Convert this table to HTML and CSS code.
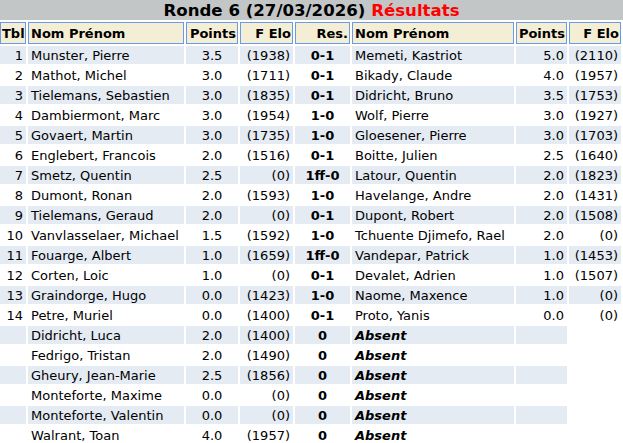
FILE: index.html
```html
<!DOCTYPE html>
<html lang="fr">
<head>
<meta charset="utf-8">
<title>Ronde 6</title>
<link rel="stylesheet" href="styles.css">
</head>
<body>
<div class="title">Ronde 6 (27/03/2026) <span class="red">Résultats</span></div>
<table class="res">
<colgroup>
<col class="c-tbl"><col class="c-nom1"><col class="c-pts"><col class="c-elo"><col class="c-res"><col class="c-nom2"><col class="c-pts2"><col class="c-elo2">
</colgroup>
<thead>
<tr><th>Tbl</th><th class="l">Nom Prénom</th><th>Points</th><th>F Elo</th><th>Res.</th><th class="l">Nom Prénom</th><th>Points</th><th>F Elo</th></tr>
</thead>
<tbody>
<tr class="o"><td class="r">1</td><td>Munster, Pierre</td><td class="c">3.5</td><td class="r">(1938)</td><td class="c b">0-1</td><td>Memeti, Kastriot</td><td class="r">5.0</td><td class="r">(2110)</td></tr>
<tr><td class="r">2</td><td>Mathot, Michel</td><td class="c">3.0</td><td class="r">(1711)</td><td class="c b">0-1</td><td>Bikady, Claude</td><td class="r">4.0</td><td class="r">(1957)</td></tr>
<tr class="o"><td class="r">3</td><td>Tielemans, Sebastien</td><td class="c">3.0</td><td class="r">(1835)</td><td class="c b">0-1</td><td>Didricht, Bruno</td><td class="r">3.5</td><td class="r">(1753)</td></tr>
<tr><td class="r">4</td><td>Dambiermont, Marc</td><td class="c">3.0</td><td class="r">(1954)</td><td class="c b">1-0</td><td>Wolf, Pierre</td><td class="r">3.0</td><td class="r">(1927)</td></tr>
<tr class="o"><td class="r">5</td><td>Govaert, Martin</td><td class="c">3.0</td><td class="r">(1735)</td><td class="c b">1-0</td><td>Gloesener, Pierre</td><td class="r">3.0</td><td class="r">(1703)</td></tr>
<tr><td class="r">6</td><td>Englebert, Francois</td><td class="c">2.0</td><td class="r">(1516)</td><td class="c b">0-1</td><td>Boitte, Julien</td><td class="r">2.5</td><td class="r">(1640)</td></tr>
<tr class="o"><td class="r">7</td><td>Smetz, Quentin</td><td class="c">2.5</td><td class="r">(0)</td><td class="c b">1ff-0</td><td>Latour, Quentin</td><td class="r">2.0</td><td class="r">(1823)</td></tr>
<tr><td class="r">8</td><td>Dumont, Ronan</td><td class="c">2.0</td><td class="r">(1593)</td><td class="c b">1-0</td><td>Havelange, Andre</td><td class="r">2.0</td><td class="r">(1431)</td></tr>
<tr class="o"><td class="r">9</td><td>Tielemans, Geraud</td><td class="c">2.0</td><td class="r">(0)</td><td class="c b">0-1</td><td>Dupont, Robert</td><td class="r">2.0</td><td class="r">(1508)</td></tr>
<tr><td class="r">10</td><td>Vanvlasselaer, Michael</td><td class="c">1.5</td><td class="r">(1592)</td><td class="c b">1-0</td><td>Tchuente Djimefo, Rael</td><td class="r">2.0</td><td class="r">(0)</td></tr>
<tr class="o"><td class="r">11</td><td>Fouarge, Albert</td><td class="c">1.0</td><td class="r">(1659)</td><td class="c b">1ff-0</td><td>Vandepar, Patrick</td><td class="r">1.0</td><td class="r">(1453)</td></tr>
<tr><td class="r">12</td><td>Corten, Loic</td><td class="c">1.0</td><td class="r">(0)</td><td class="c b">0-1</td><td>Devalet, Adrien</td><td class="r">1.0</td><td class="r">(1507)</td></tr>
<tr class="o"><td class="r">13</td><td>Graindorge, Hugo</td><td class="c">0.0</td><td class="r">(1423)</td><td class="c b">1-0</td><td>Naome, Maxence</td><td class="r">1.0</td><td class="r">(0)</td></tr>
<tr><td class="r">14</td><td>Petre, Muriel</td><td class="c">0.0</td><td class="r">(1400)</td><td class="c b">0-1</td><td>Proto, Yanis</td><td class="r">0.0</td><td class="r">(0)</td></tr>
<tr class="o"><td></td><td>Didricht, Luca</td><td class="c">2.0</td><td class="r">(1400)</td><td class="c b">0</td><td class="abs">Absent</td><td></td></tr>
<tr><td></td><td>Fedrigo, Tristan</td><td class="c">2.0</td><td class="r">(1490)</td><td class="c b">0</td><td class="abs">Absent</td><td></td></tr>
<tr class="o"><td></td><td>Gheury, Jean-Marie</td><td class="c">2.5</td><td class="r">(1856)</td><td class="c b">0</td><td class="abs">Absent</td><td></td></tr>
<tr><td></td><td>Monteforte, Maxime</td><td class="c">0.0</td><td class="r">(0)</td><td class="c b">0</td><td class="abs">Absent</td><td></td></tr>
<tr class="o"><td></td><td>Monteforte, Valentin</td><td class="c">0.0</td><td class="r">(0)</td><td class="c b">0</td><td class="abs">Absent</td><td></td></tr>
<tr><td></td><td>Walrant, Toan</td><td class="c">4.0</td><td class="r">(1957)</td><td class="c b">0</td><td class="abs">Absent</td><td></td></tr>
</tbody>
</table>
</body>
</html>
```

FILE: styles.css
```css
html, body {
  margin: 0;
  padding: 0;
  background: #ffffff;
}
body {
  font-family: "DejaVu Sans", Verdana, sans-serif;
  font-size: 13px;
  color: #000000;
  overflow: hidden;
}
.title {
  height: 20px;
  line-height: 22px;
  background: #c3c6c6;
  text-align: center;
  font-weight: bold;
  font-size: 16.6px;
  color: #000000;
  white-space: nowrap;
}
.red {
  color: #ff0000;
}
.res {
  table-layout: fixed;
  border-collapse: separate;
  border-spacing: 2px;
  width: 625px;
  margin-left: -2px;
}
.c-tbl { width: 26px; }
.c-nom1 { width: 156px; }
.c-pts { width: 52px; }
.c-elo { width: 53px; }
.c-res { width: 55px; }
.c-nom2 { width: 162px; }
.c-pts2 { width: 51px; }
.c-elo2 { width: 52px; }
.res th {
  height: 20px;
  box-sizing: border-box;
  padding: 1px 1px 0;
  border: 1px solid #6b9be6;
  background: #f4eed4;
  font-weight: bold;
  text-align: right;
  white-space: nowrap;
  overflow: hidden;
  line-height: 19px;
}
.res th.l {
  text-align: left;
  padding-left: 2px;
}
.res td {
  height: 17px;
  padding: 1px 3px 0;
  line-height: 17px;
  white-space: nowrap;
  overflow: hidden;
}
.res tr.o td {
  background: #e4ebf3;
}
.res td.r { text-align: right; }
.res td.c { text-align: center; }
.res td.b { font-weight: bold; }
.res td.abs {
  font-weight: bold;
  font-style: italic;
}
```
